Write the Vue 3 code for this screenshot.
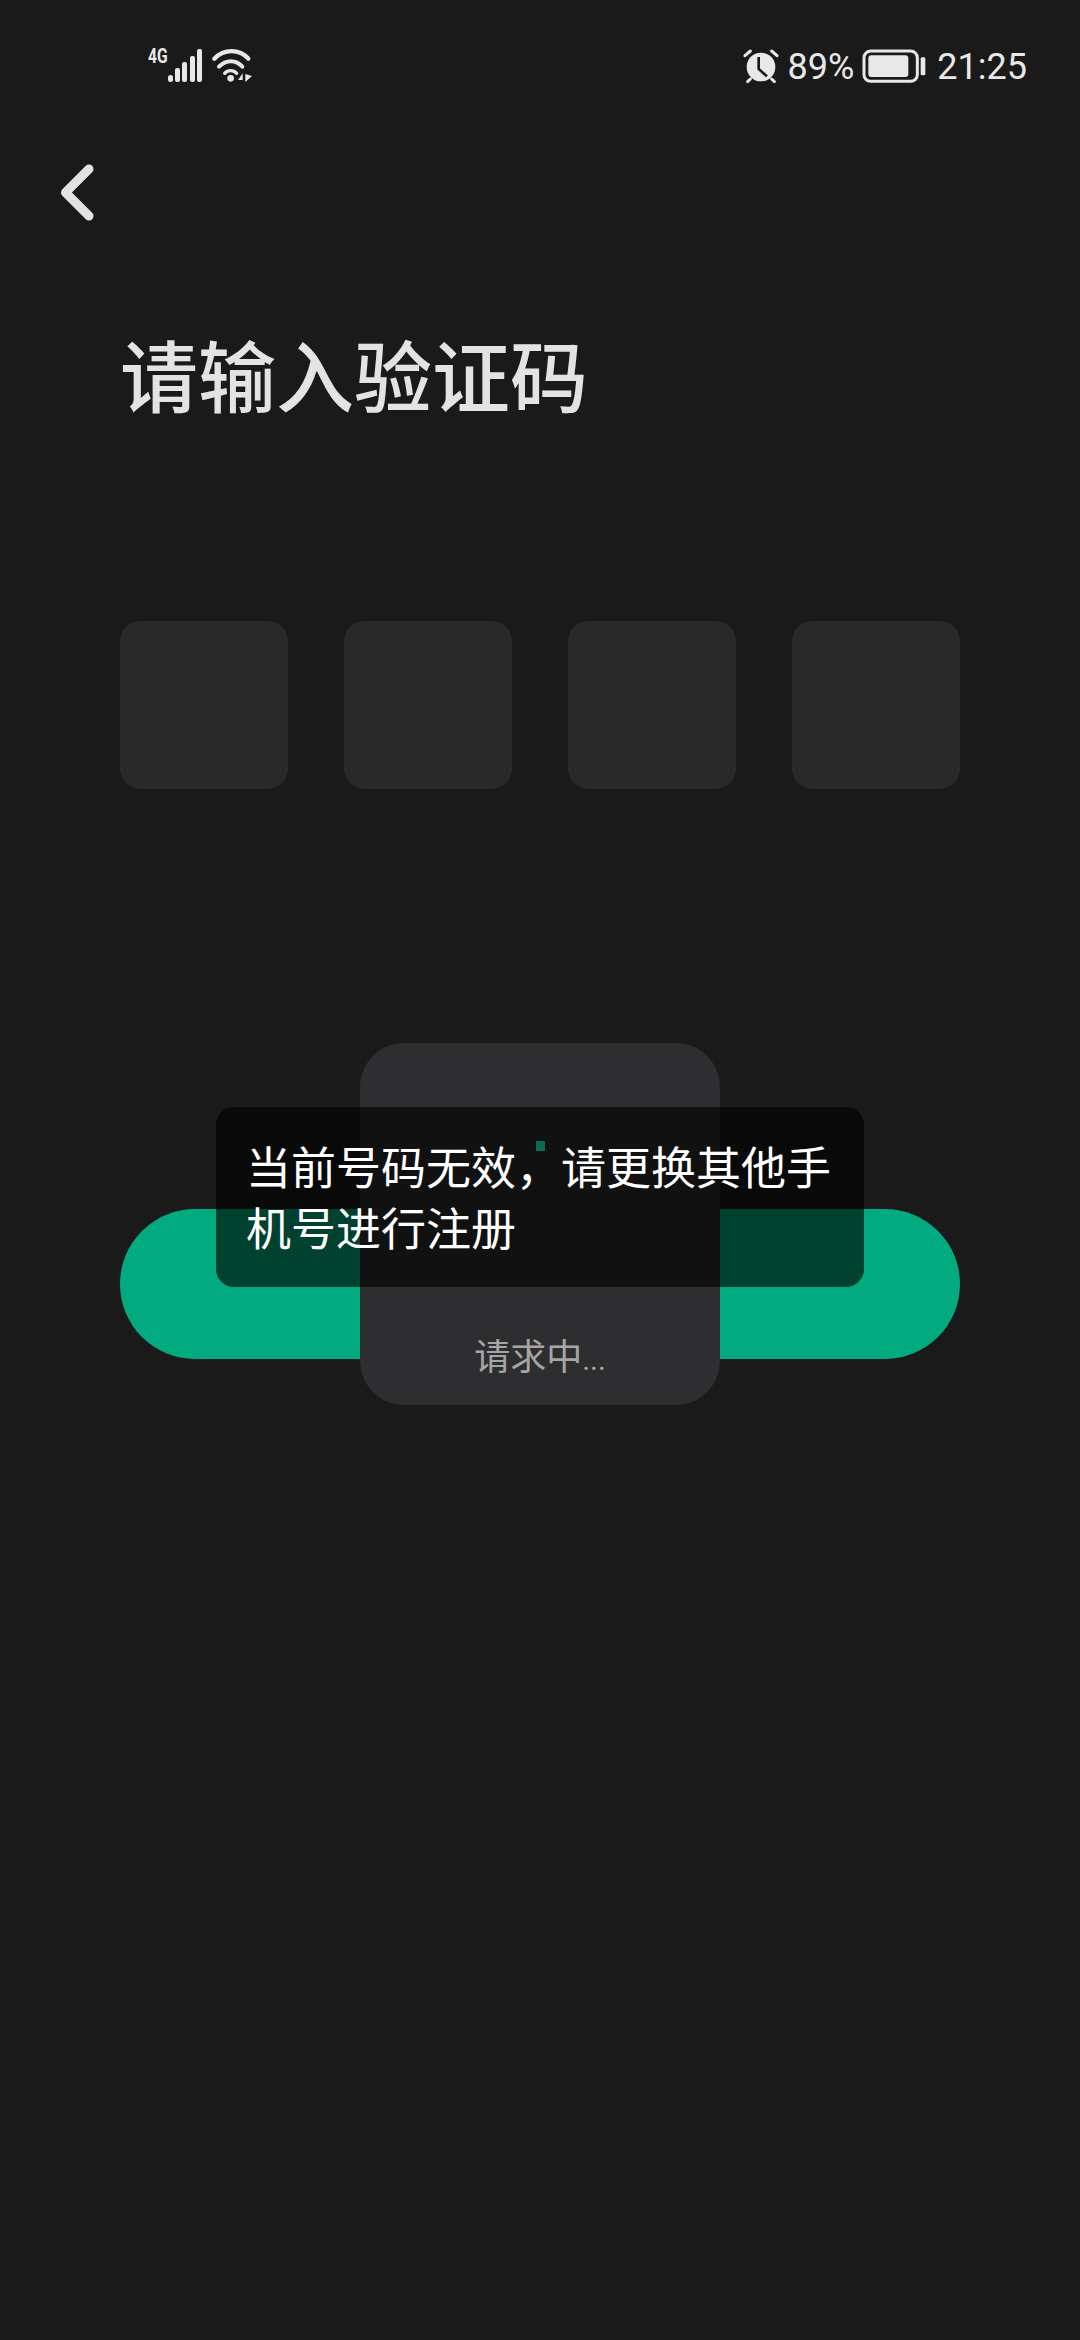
<script setup>
const boxes = [1, 2, 3, 4]
</script>

<template>
  <div class="page">
    <header class="status">
      <div class="status-left">
        <span class="net">4G</span>
        <svg class="signal" width="36" height="36" viewBox="0 0 36 36">
          <rect x="1" y="27" width="5" height="7" rx="2.5" />
          <rect x="8" y="20" width="5" height="14" rx="2" />
          <rect x="15" y="14" width="5" height="20" rx="2" />
          <rect x="23" y="8" width="5" height="26" rx="2" />
          <rect x="30" y="1" width="5" height="33" rx="2" />
        </svg>
        <svg class="wifi" width="44" height="36" viewBox="270 84 132 108">
          <path d="M283 116 C312 86 358 86 385 116" class="arc" stroke-width="13" />
          <path d="M297 140 C318 118 348 118 367 140" class="arc" stroke-width="12" />
          <path d="M314 160 C324 149 340 149 350 160" class="arc" stroke-width="10" />
          <circle cx="332" cy="175" r="10" class="fill" />
          <path d="M354 180 L368 160 V180 Z M376 162 V186 L396 168 Z" class="fill" />
        </svg>
      </div>
      <div class="status-right">
        <svg class="alarm" width="36" height="34" viewBox="70 88 108 102">
          <circle cx="124" cy="142" r="43" class="fill" />
          <path d="M76 108 L92 94 M172 108 L156 94 M92 178 L84 186 M156 178 L164 186" class="arc" stroke-width="9" />
          <path d="M117 112 V148 L142 170" fill="none" stroke="#1a1a1a" stroke-width="8" />
        </svg>
        <span class="pct">89%</span>
        <svg class="battery" width="64" height="34" viewBox="428 88 192 102">
          <rect x="434" y="94" width="160" height="91" rx="20" fill="none" stroke="#e8e8e8" stroke-width="9" />
          <rect x="447" y="107" width="120" height="65" rx="9" class="fill" />
          <rect x="604" y="113" width="14" height="54" rx="4" class="fill" />
        </svg>
        <span class="time">21:25</span>
      </div>
    </header>

    <button class="back" type="button" aria-label="返回">
      <svg width="36" height="58" viewBox="0 0 36 58">
        <path d="M31 5 L7.5 28.5 L31 52" fill="none" stroke="#e3e3e3" stroke-width="9" stroke-linecap="round" stroke-linejoin="round" />
      </svg>
    </button>

    <main class="content">
      <h1 class="title">请输入验证码</h1>
      <div class="code-row">
        <div v-for="b in boxes" :key="b" class="code-box"></div>
      </div>
      <div class="submit"></div>
    </main>

    <div class="loading">
      <span class="loading-text">请求中<span class="dots">...</span></span>
    </div>
    <div class="toast">当前号码无效，请更换其他手机号进行注册</div>
    <span class="dot"></span>
  </div>
</template>

<style>
html, body { margin: 0; background: #1a1a1a; }
</style>

<style scoped>
.page {
  position: relative;
  width: 1080px;
  height: 2340px;
  overflow: hidden;
  background: #1a1a1a;
  font-family: "Noto Sans CJK SC", "Noto Sans", sans-serif;
}
.status {
  height: 164px;
  box-sizing: border-box;
  padding: 48px 53px 0 148px;
  display: flex;
  justify-content: space-between;
  align-items: flex-start;
  color: #e8e8e8;
}
.status-left { display: flex; align-items: flex-start; }
.status svg { display: block; }
.signal { fill: #e8e8e8; margin-right: 7px; }
.arc { fill: none; stroke: #e8e8e8; stroke-linecap: round; }
.fill { fill: #e8e8e8; }
.net {
  width: 19px;
  font-family: "Roboto", sans-serif;
  font-weight: 700;
  font-size: 20px;
  line-height: 16px;
  transform: scaleX(0.78);
  transform-origin: left;
}
.status-right { display: flex; align-items: center; height: 36px; }
.alarm { margin-right: 9px; }
.pct, .time {
  font-family: "Roboto", sans-serif;
  font-size: 36px;
  line-height: 36px;
  transform: scaleY(1.05);
}
.pct { margin-right: 8px; }
.battery { margin-right: 11px; }
.back {
  display: block;
  margin-left: 58px;
  width: 36px;
  height: 58px;
  padding: 0;
  border: 0;
  background: none;
}
.back svg { display: block; }
.content { padding: 0 120px; }
.title {
  margin: 101px 0 0;
  font-size: 78px;
  line-height: 100px;
  font-weight: 500;
  color: #e3e3e3;
}
.code-row {
  margin-top: 198px;
  display: flex;
  justify-content: space-between;
}
.code-box {
  width: 168px;
  height: 168px;
  border-radius: 20px;
  background: #292929;
}
.submit {
  margin-top: 420px;
  height: 150px;
  border-radius: 75px;
  background: #02ab7f;
}
.loading {
  position: absolute;
  left: 360px;
  top: 1043px;
  width: 360px;
  height: 362px;
  border-radius: 44px;
  background: #2e2e30;
}
.dot {
  position: absolute;
  left: 536px;
  top: 1141px;
  width: 9px;
  height: 10px;
  background: #0b6b54;
}
.loading-text {
  position: absolute;
  left: 0;
  right: 0;
  top: 286px;
  text-align: center;
  font-size: 36px;
  line-height: 50px;
  color: #a6a6a6;
}
.dots { font-family: "Roboto", sans-serif; font-size: 30px; }
.toast {
  position: absolute;
  left: 216px;
  top: 1107px;
  width: 648px;
  height: 180px;
  box-sizing: border-box;
  padding: 28px 30px 0;
  border-radius: 18px;
  background: rgba(0, 0, 0, 0.62);
  color: #fff;
  font-size: 45px;
  line-height: 61px;
}
</style>
